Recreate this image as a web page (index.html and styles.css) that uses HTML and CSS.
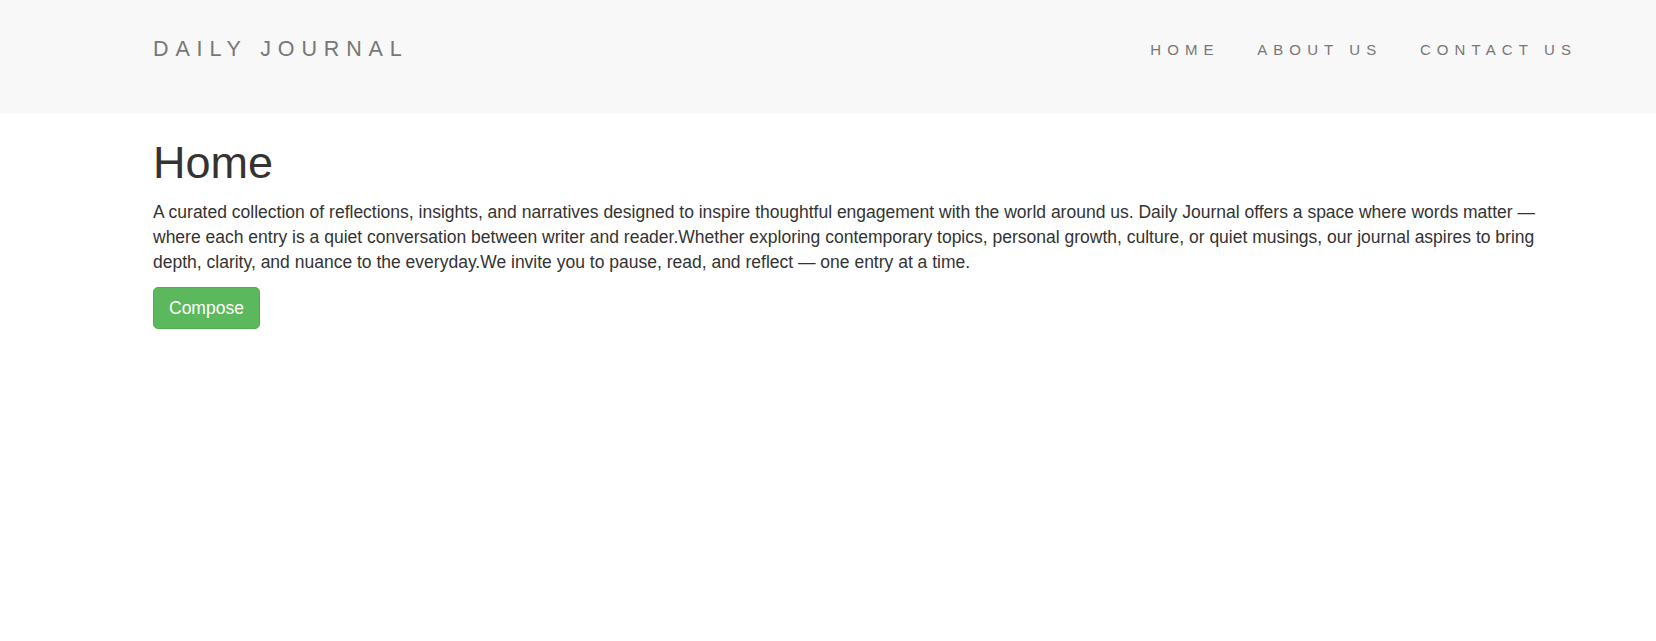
FILE: index.html
```html
<!DOCTYPE html>
<html lang="en">
<head>
<meta charset="utf-8">
<title>Daily Journal</title>
<link rel="stylesheet" href="styles.css">
</head>
<body>
<header class="navbar">
  <div class="container nav-inner">
    <a class="brand" href="#">DAILY JOURNAL</a>
    <ul class="nav-links">
      <li><a href="#">HOME</a></li>
      <li><a href="#">ABOUT US</a></li>
      <li><a href="#">CONTACT US</a></li>
    </ul>
  </div>
</header>
<main class="container">
  <h1 class="title">Home</h1>
  <p class="intro">A curated collection of reflections, insights, and narratives designed to inspire thoughtful engagement with the world around us. Daily Journal offers a space where words matter — where each entry is a quiet conversation between writer and reader.Whether exploring contemporary topics, personal growth, culture, or quiet musings, our journal aspires to bring depth, clarity, and nuance to the everyday.We invite you to pause, read, and reflect — one entry at a time.</p>
  <a class="btn-compose" href="#">Compose</a>
</main>
</body>
</html>
```

FILE: styles.css
```css
* { box-sizing: border-box; }
html, body {
  margin: 0;
  padding: 0;
  background: #fff;
  font-family: "Liberation Sans", Arial, sans-serif;
  color: #333;
  font-size: 17.5px;
  line-height: 25px;
}
.container {
  margin-left: 153px;
  margin-right: 81px;
}
.navbar {
  background: #f8f8f8;
  height: 113px;
}
.nav-inner {
  height: 113px;
  display: flex;
  align-items: center;
  justify-content: space-between;
  padding-bottom: 14px;
}
.brand {
  color: #777;
  text-decoration: none;
  font-size: 21.5px;
  line-height: 25px;
  letter-spacing: 6.85px;
}
.nav-links {
  list-style: none;
  margin: 0 -20.75px 0 0;
  padding: 0;
  display: flex;
}
.nav-links a {
  display: block;
  padding: 0 18.75px;
  color: #777;
  text-decoration: none;
  font-size: 15px;
  line-height: 20px;
  letter-spacing: 6.1px;
}
.title {
  margin: 24.5px 0 12.5px;
  font-size: 45px;
  line-height: 1.1;
  font-weight: 500;
  color: #333;
}
.intro {
  margin: 0 0 12.5px;
}
.btn-compose {
  display: inline-block;
  padding: 7.5px 15px;
  font-size: 17.5px;
  line-height: 25px;
  color: #fff;
  background: #5cb85c;
  border: 1.25px solid #4cae4c;
  border-radius: 5px;
  text-decoration: none;
}
```
